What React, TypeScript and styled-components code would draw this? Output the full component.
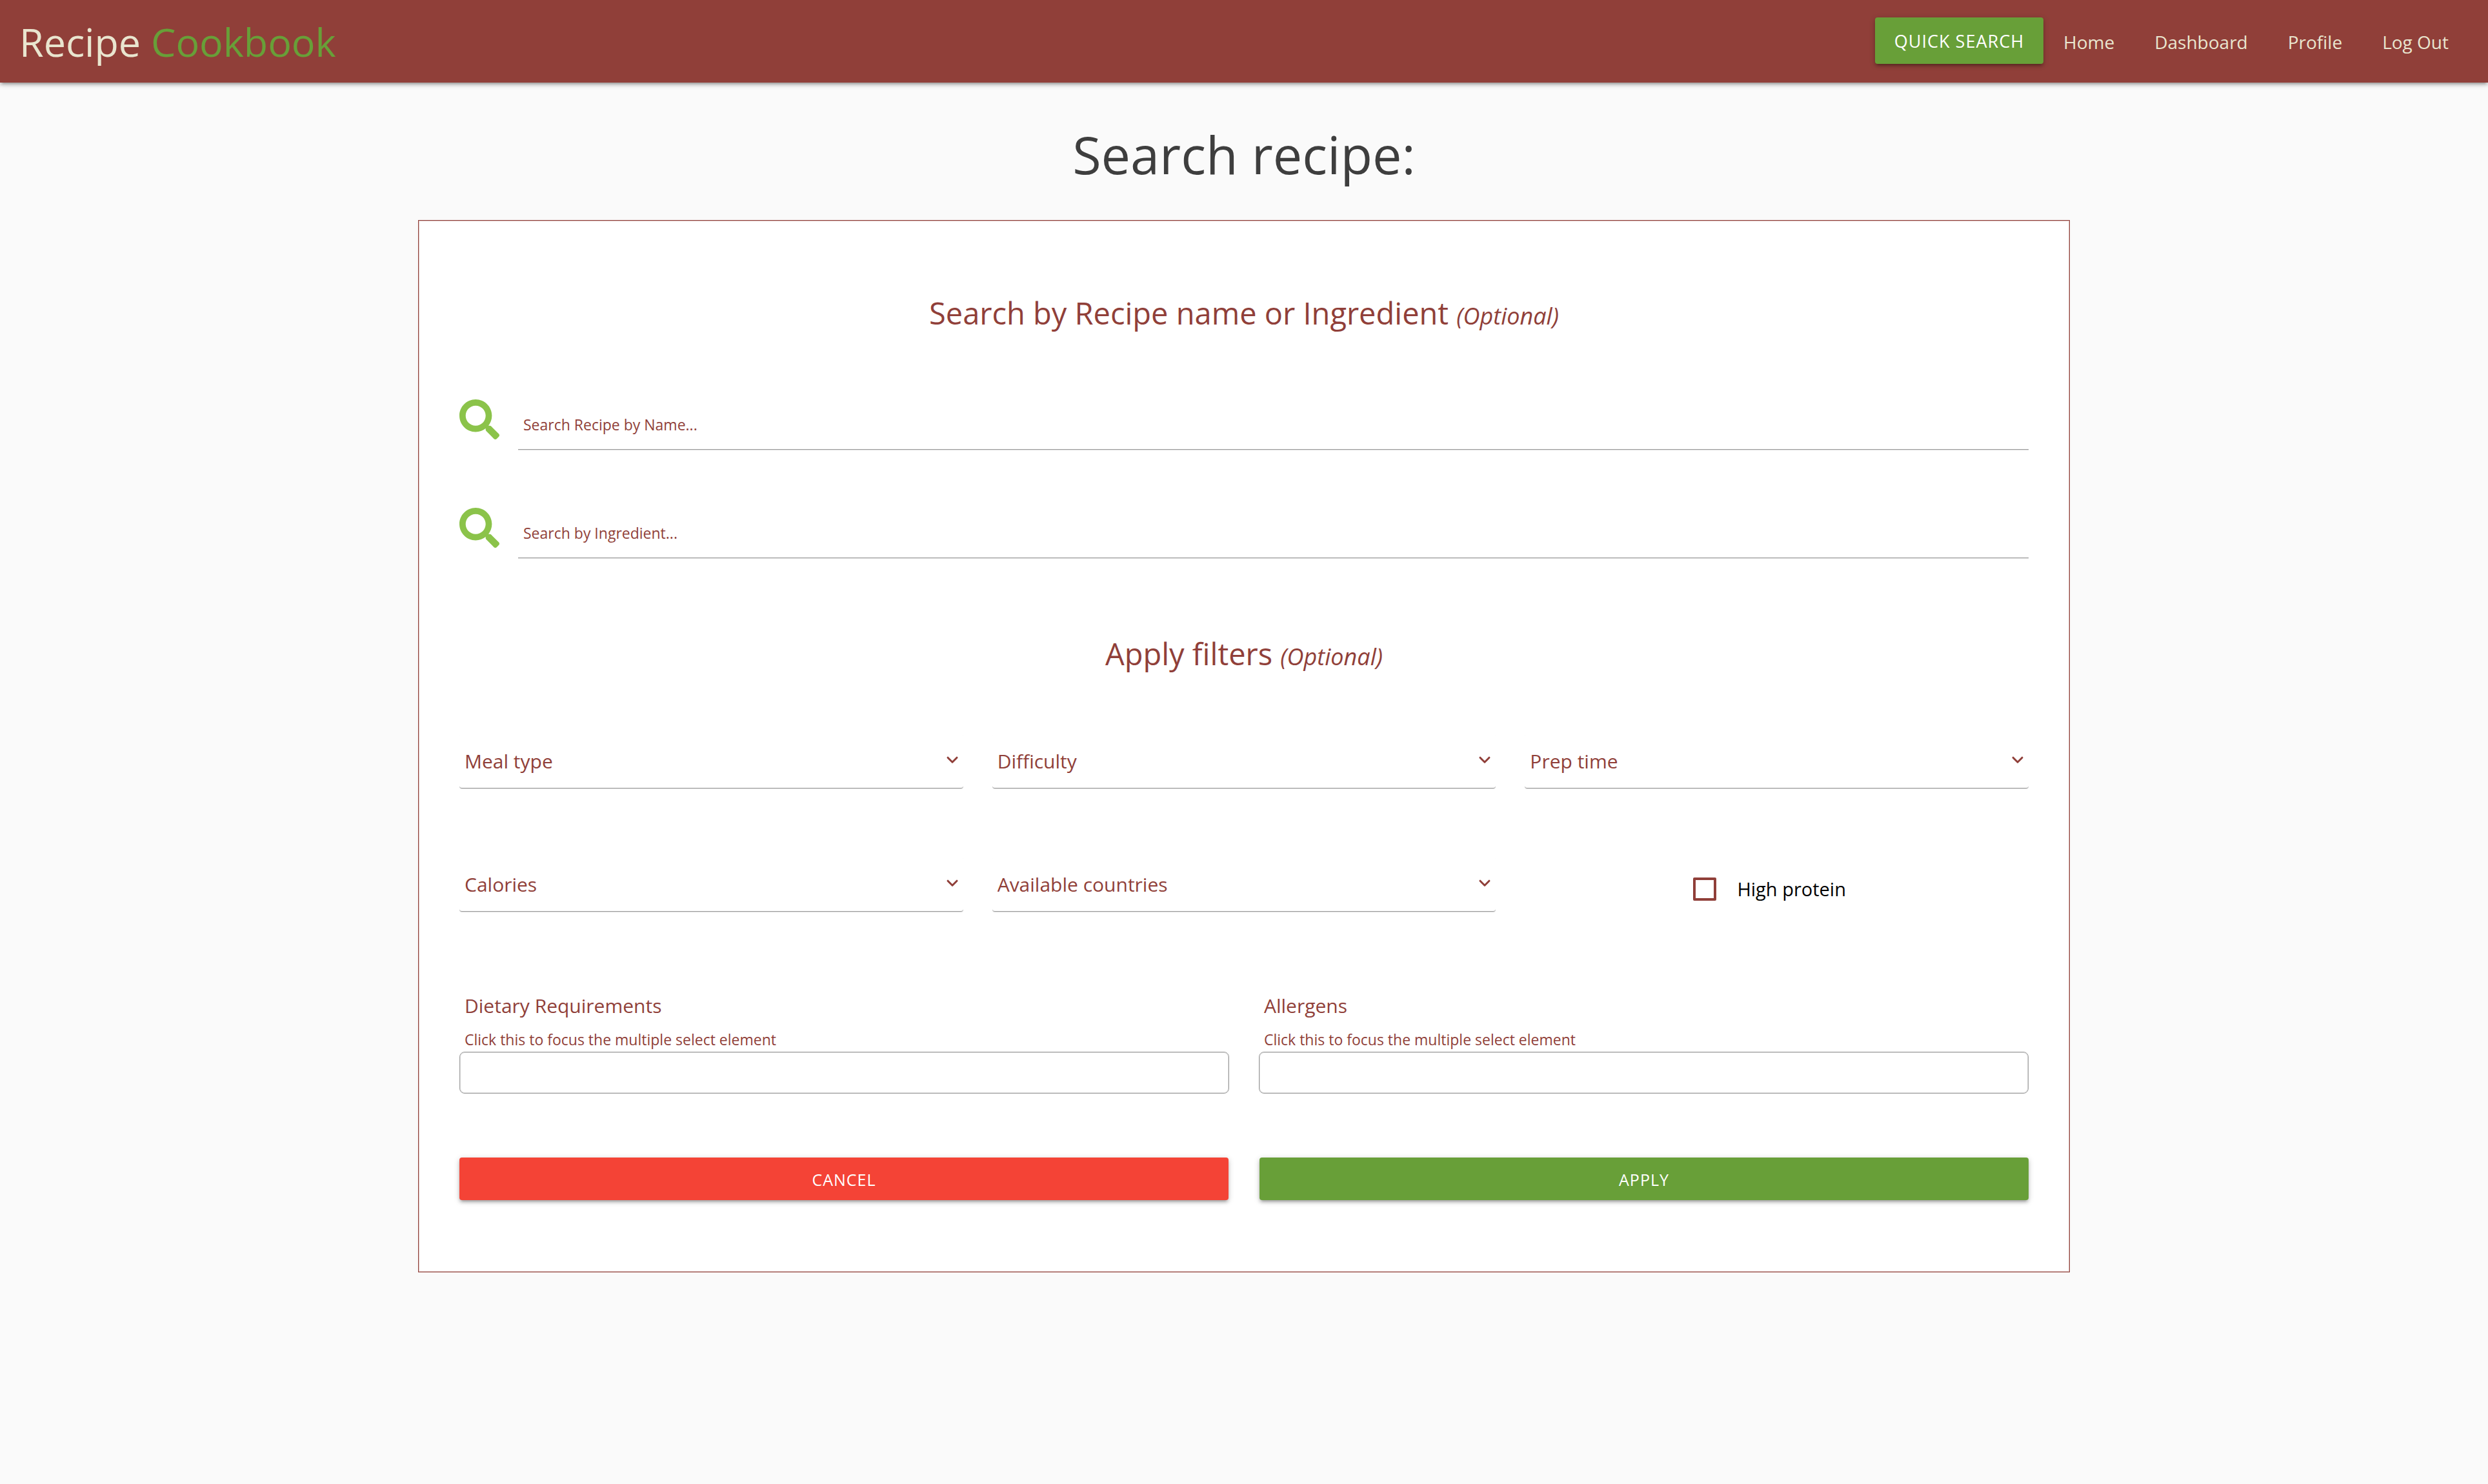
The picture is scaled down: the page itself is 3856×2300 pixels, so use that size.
import React from "react";
import styled, { createGlobalStyle } from "styled-components";
import { FaSearch } from "react-icons/fa";

const color = {
  brick: "#903f39",
  cream: "#e9e5cf",
  green: "#689f38",
  lime: "#8bc34a",
  red: "#f44336",
  ink: "#3e3e3e",
  line: "#9e9e9e",
  lineSoft: "#dcdcdc",
};

const depth =
  "0 4px 4px 0 rgba(0,0,0,0.14), 0 6px 2px -4px rgba(0,0,0,0.12), 0 2px 10px 0 rgba(0,0,0,0.2)";

const GlobalStyle = createGlobalStyle`
  *, *::before, *::after { box-sizing: border-box; }
  body {
    margin: 0;
    background: #fafafa;
    color: ${color.ink};
    font-family: "Open Sans", "Noto Sans", sans-serif;
  }
  button, input, select { font-family: inherit; margin: 0; }
`;

const Header = styled.header`
  display: flex;
  align-items: center;
  justify-content: space-between;
  min-height: 128px;
  padding: 2px 30px 0;
  background: ${color.brick};
  box-shadow: ${depth};
`;

const Logo = styled.a`
  color: ${color.cream};
  font-size: 61px;
  line-height: 82px;
  text-decoration: none;

  span { color: ${color.green}; }
`;

const Nav = styled.nav`
  display: flex;
  align-items: center;
`;

const NavLink = styled.a`
  padding: 0 31px;
  color: ${color.cream};
  font-size: 28px;
  line-height: 40px;
  text-decoration: none;
`;

const Button = styled.button<{ $tone: string }>`
  height: 66px;
  padding: 2px 30px 0;
  border: 0;
  border-radius: 4px;
  background: ${(p) => p.$tone};
  box-shadow: ${depth};
  color: #fff;
  font-size: 25px;
  line-height: 34px;
  letter-spacing: 1px;
  text-transform: uppercase;
  cursor: pointer;
`;

const QuickButton = styled(Button)`
  height: 72px;
  margin-bottom: 5px;
  font-size: 27px;
`;

const Main = styled.main`
  width: 90%;
  max-width: 2560px;
  margin: 0 auto;
  padding: 56px 0 80px;
`;

const Title = styled.h1`
  margin: 0 0 47px;
  font-size: 81px;
  font-weight: 400;
  line-height: 110px;
  text-align: center;
`;

const Card = styled.form`
  padding: 113px 63px 111px;
  border: 1px solid ${color.brick};
  background: #fff;
  box-shadow: inset 0 0 0 1px #dcc3c1;
  color: ${color.brick};
`;

const Section = styled.section`
  & + & { margin-top: 118px; }
`;

const SectionTitle = styled.h2<{ $gap: number }>`
  margin: 0 0 ${(p) => p.$gap}px;
  font-size: 47px;
  font-weight: 400;
  line-height: 60px;
  text-align: center;

  em {
    font-size: 36px;
    line-height: 36px;
  }
`;

const SearchRow = styled.div`
  display: flex;
  align-items: flex-start;
  gap: 29px;

  & + & { margin-top: 90px; }

  svg {
    flex: none;
    width: 62px;
    height: 62px;
    color: ${color.lime};
  }
`;

const SearchInput = styled.input`
  flex: 1;
  min-width: 0;
  height: 78px;
  padding: 0 8px;
  border: 0;
  border-bottom: 1px solid ${color.line};
  background: transparent;
  box-shadow: 0 1px 0 ${color.lineSoft};
  color: ${color.brick};
  font-size: 23px;

  &::placeholder { color: ${color.brick}; opacity: 1; }
`;

const FilterGrid = styled.div`
  display: grid;
  grid-template-columns: repeat(3, 1fr);
  gap: 106px 45px;
`;

const SelectBox = styled.div`
  display: grid;
  align-items: center;

  > * { grid-area: 1 / 1; }

  svg {
    justify-self: end;
    margin: 0 6px 4px 0;
    pointer-events: none;
  }
`;

const Select = styled.select`
  appearance: none;
  width: 100%;
  height: 85px;
  padding: 0 40px 0 8px;
  border: 0;
  border-bottom: 1px solid ${color.line};
  border-radius: 4px;
  background: transparent;
  box-shadow: 0 1px 0 ${color.lineSoft};
  color: ${color.brick};
  font-size: 30px;
`;

const CheckLabel = styled.label`
  display: flex;
  align-items: center;
  justify-content: center;
  gap: 32px;
  padding: 14px 22px 0 0;
  color: #000;
  font-size: 29px;
  line-height: 40px;
`;

const CheckBox = styled.input`
  appearance: none;
  width: 36px;
  height: 36px;
  margin: 0;
  border: 4px solid ${color.brick};
  border-radius: 2px;

  &:checked { background: ${color.brick}; }
`;

const TagGrid = styled.div`
  display: grid;
  grid-template-columns: repeat(2, 1fr);
  gap: 46px;
  margin-top: 126px;
`;

const TagField = styled.div`
  display: flex;
  flex-direction: column;
`;

const TagLabel = styled.label`
  padding-left: 8px;
  font-size: 30px;
  line-height: 40px;
`;

const TagHint = styled.p`
  margin: 15px 0 2px;
  padding-left: 8px;
  font-size: 23px;
  line-height: 34px;
`;

const TagSelect = styled.select`
  appearance: none;
  width: 100%;
  height: 65px;
  padding: 0 8px;
  border: 1px solid ${color.line};
  border-radius: 8px;
  background: #fff;
  box-shadow: inset 0 0 0 1px ${color.lineSoft};
  color: ${color.brick};
  overflow: hidden;
`;

const Actions = styled.div`
  display: grid;
  grid-template-columns: repeat(2, 1fr);
  gap: 48px;
  margin-top: 99px;
`;

function Chevron() {
  return (
    <svg width="22" height="14" viewBox="0 0 22 14" fill="none" aria-hidden="true">
      <path
        d="M4 3.2 L11 10.2 L18 3.2"
        stroke={color.brick}
        strokeWidth="3"
        strokeLinecap="round"
        strokeLinejoin="round"
      />
    </svg>
  );
}

function Search({ label }: { label: string }) {
  return (
    <SearchRow>
      <FaSearch aria-hidden="true" />
      <SearchInput type="text" placeholder={label} aria-label={label} />
    </SearchRow>
  );
}

function Filter({ label }: { label: string }) {
  return (
    <SelectBox>
      <Select aria-label={label} defaultValue="">
        <option value="">{label}</option>
      </Select>
      <Chevron />
    </SelectBox>
  );
}

function Tags({ id, label }: { id: string; label: string }) {
  return (
    <TagField>
      <TagLabel htmlFor={id}>{label}</TagLabel>
      <TagHint id={`${id}-hint`}>Click this to focus the multiple select element</TagHint>
      <TagSelect id={id} multiple aria-describedby={`${id}-hint`} />
    </TagField>
  );
}

export default function App() {
  return (
    <>
      <GlobalStyle />
      <Header>
        <Logo href="#">
          Recipe <span>Cookbook</span>
        </Logo>
        <Nav>
          <QuickButton type="button" $tone={color.green}>Quick Search</QuickButton>
          {["Home", "Dashboard", "Profile", "Log Out"].map((item) => (
            <NavLink key={item} href="#">{item}</NavLink>
          ))}
        </Nav>
      </Header>
      <Main>
        <Title>Search recipe:</Title>
        <Card onSubmit={(e) => e.preventDefault()}>
          <Section>
            <SectionTitle $gap={104}>
              Search by Recipe name or Ingredient <em>(Optional)</em>
            </SectionTitle>
            <Search label="Search Recipe by Name..." />
            <Search label="Search by Ingredient..." />
          </Section>
          <Section>
            <SectionTitle $gap={94}>
              Apply filters <em>(Optional)</em>
            </SectionTitle>
            <FilterGrid>
              {["Meal type", "Difficulty", "Prep time", "Calories", "Available countries"].map(
                (label) => (
                  <Filter key={label} label={label} />
                )
              )}
              <CheckLabel>
                <CheckBox type="checkbox" />
                High protein
              </CheckLabel>
            </FilterGrid>
            <TagGrid>
              <Tags id="dietary" label="Dietary Requirements" />
              <Tags id="allergens" label="Allergens" />
            </TagGrid>
          </Section>
          <Actions>
            <Button type="button" $tone={color.red}>Cancel</Button>
            <Button type="submit" $tone={color.green}>Apply</Button>
          </Actions>
        </Card>
      </Main>
    </>
  );
}
